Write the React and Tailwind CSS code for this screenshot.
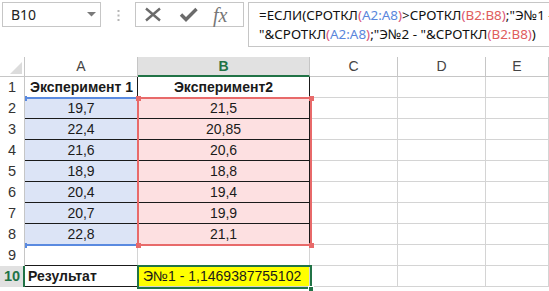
import React from "react";

const cellFont = { fontFamily: '"Liberation Sans", Arial, sans-serif' };

const dataA = ["19,7", "22,4", "21,6", "18,9", "20,4", "20,7", "22,8"];
const dataB = ["21,5", "20,85", "20,6", "18,8", "19,4", "19,9", "21,1"];

function Ref({ c, children }) {
  return <span className={c === "a" ? "text-[#5a86dc]" : "text-[#e05c5c]"}>{children}</span>;
}

function P({ children }) {
  return <span className="text-[#d9577a]">{children}</span>;
}

function TopBar() {
  return (
    <div className="flex h-[57px] items-start pt-[2px]" style={{ fontFamily: '"Noto Sans", "Open Sans", sans-serif' }}>
      <div className="ml-[2px] flex h-[25px] w-[99px] items-center justify-between border border-[#c6c6c6] pl-[8px] pr-[4px] text-[14px] text-[#222]">
        <span>B10</span>
        <svg width="9" height="5" viewBox="0 0 9 5">
          <polygon points="0,0 9,0 4.5,4.5" fill="#7a7a7a" />
        </svg>
      </div>
      <div className="flex w-[34px] justify-center pt-[8px]">
        <svg width="3" height="11" viewBox="0 0 3 11">
          <rect x="0.5" y="0" width="2" height="2" fill="#b5b5b5" />
          <rect x="0.5" y="4.5" width="2" height="2" fill="#b5b5b5" />
          <rect x="0.5" y="9" width="2" height="2" fill="#b5b5b5" />
        </svg>
      </div>
      <div className="flex h-[25px] w-[109px] items-center border border-[#c6c6c6]">
        <svg className="ml-[8px]" width="18" height="15" viewBox="0 0 18 15">
          <path d="M2 1.5 L16 13.5 M16 1.5 L2 13.5" stroke="#6b6b6b" strokeWidth="2.4" />
        </svg>
        <svg className="ml-[17px]" width="19" height="15" viewBox="0 0 19 15">
          <path d="M2 7.5 L7 12.5 L17.5 2" stroke="#6b6b6b" strokeWidth="3.4" fill="none" />
        </svg>
        <span
          className="ml-[15px] text-[20px] italic leading-none text-[#777]"
          style={{ fontFamily: '"Liberation Serif", "Times New Roman", serif' }}
        >
          fx
        </span>
      </div>
      <div className="ml-[4px] h-[45px] flex-1 border border-r-0 border-[#c6c6c6] pl-[10px] pt-[3px] text-[13.4px] leading-[19px] text-[#111] whitespace-nowrap overflow-hidden">
        <div>
          =ЕСЛИ(СРОТКЛ<P>(</P><Ref c="a">A2:A8</Ref><P>)</P>&gt;СРОТКЛ<P>(</P><Ref c="b">B2:B8</Ref><P>)</P>;"Э№1 - "
        </div>
        <div>
          "&amp;СРОТКЛ<P>(</P><Ref c="a">A2:A8</Ref><P>)</P>;"Э№2 - "&amp;СРОТКЛ<P>(</P><Ref c="b">B2:B8</Ref><P>)</P>)
        </div>
      </div>
    </div>
  );
}

function ColHead({ label, active }) {
  return (
    <div
      className={`flex h-[20px] items-center justify-center border-r text-[14px] ${
        active
          ? "border-r-[#c6c6c6] border-b-2 border-b-[#217346] bg-[#e1e1e1] font-bold text-[#217346]"
          : "border-b border-[#c6c6c6] text-[#444]"
      }`}
    >
      {label}
    </div>
  );
}

function RowHead({ n, active }) {
  return (
    <div
      className={`flex h-[21px] items-center justify-center text-[14.5px] ${
        active ? "border-r-2 border-[#217346] bg-[#e1e1e1] pl-[1px] font-bold text-[#217346]" : "border-r border-[#c6c6c6] text-[#333]"
      }`}
    >
      {n}
    </div>
  );
}

function Cell({ className = "", children }) {
  return (
    <div className={`flex h-[21px] items-center overflow-visible whitespace-nowrap border-b border-r text-[14px] text-[#1a1a1a] ${className}`}>
      {children}
    </div>
  );
}

function Blank({ n = 3 }) {
  return Array.from({ length: n }, (_, i) => <Cell key={i} className="border-[#d4d4d4]" />);
}

export default function App() {
  return (
    <div className="h-[291px] w-[549px] overflow-hidden bg-white" style={cellFont}>
      <TopBar />
      <div className="relative">
        <div className="grid grid-cols-[25px_113px_172px_88px_88px_63px]">
          <div className="flex h-[20px] items-end justify-end border-b border-r border-[#c6c6c6] pb-[2px] pr-[2px]">
            <svg width="12" height="12" viewBox="0 0 12 12">
              <polygon points="12,0 12,12 0,12" fill="#dcdcdc" />
            </svg>
          </div>
          <ColHead label="A" />
          <ColHead label="B" active />
          <ColHead label="C" />
          <ColHead label="D" />
          <ColHead label="E" />

          <RowHead n={1} />
          <Cell className="justify-center border-[#1a1a1a] pl-[1px] font-bold">Эксперимент 1</Cell>
          <Cell className="justify-center border-[#1a1a1a] font-bold">Эксперимент2</Cell>
          <Blank />

          {dataA.map((a, i) => (
            <React.Fragment key={i}>
              <RowHead n={i + 2} />
              <Cell className="justify-center border-[#1a1a1a] bg-[#dce4f6]">{a}</Cell>
              <Cell className="justify-center border-[#1a1a1a] bg-[#fde0e1]">{dataB[i]}</Cell>
              <Blank />
            </React.Fragment>
          ))}

          <RowHead n={9} />
          <Cell className="border-b-[#1a1a1a] border-r-[#d4d4d4]" />
          <Cell className="border-[#d4d4d4]" />
          <Blank />

          <RowHead n={10} active />
          <Cell className="border-[#1a1a1a] pl-[3px] font-bold">Результат</Cell>
          <Cell className="border-[#d4d4d4] bg-[#ffff00] pl-[5px]">Э№1 - 1,1469387755102</Cell>
          <Blank />
        </div>

        {/* range highlight A2:A8 */}
        <div className="absolute left-[27px] top-[40px] h-[2px] w-[110px] bg-[#5a8ae0]" />
        <div className="absolute left-[27px] top-[187px] h-[2px] w-[110px] bg-[#5a8ae0]" />
        <div className="absolute left-[25px] top-[39px] h-[5px] w-[2px] bg-[#5a8ae0]" />
        <div className="absolute left-[25px] top-[186px] h-[5px] w-[2px] bg-[#5a8ae0]" />

        {/* range highlight B2:B8 */}
        <div className="absolute left-[137px] top-[40px] h-[149px] w-[175px] border-2 border-[#e86a6a]" />
        <div className="absolute left-[136px] top-[39px] h-[5px] w-[5px] bg-[#e86a6a]" />
        <div className="absolute left-[309px] top-[39px] h-[5px] w-[5px] bg-[#e86a6a]" />
        <div className="absolute left-[136px] top-[186px] h-[5px] w-[5px] bg-[#e86a6a]" />
        <div className="absolute left-[309px] top-[186px] h-[5px] w-[5px] bg-[#e86a6a]" />

        {/* selection B10 */}
        <div className="absolute left-[137px] top-[208px] h-[24px] w-[175px] border-2 border-[#217346]" />
        <div className="absolute left-[308px] top-[229px] h-[6px] w-[6px] border border-white bg-[#217346]" />
      </div>
    </div>
  );
}
